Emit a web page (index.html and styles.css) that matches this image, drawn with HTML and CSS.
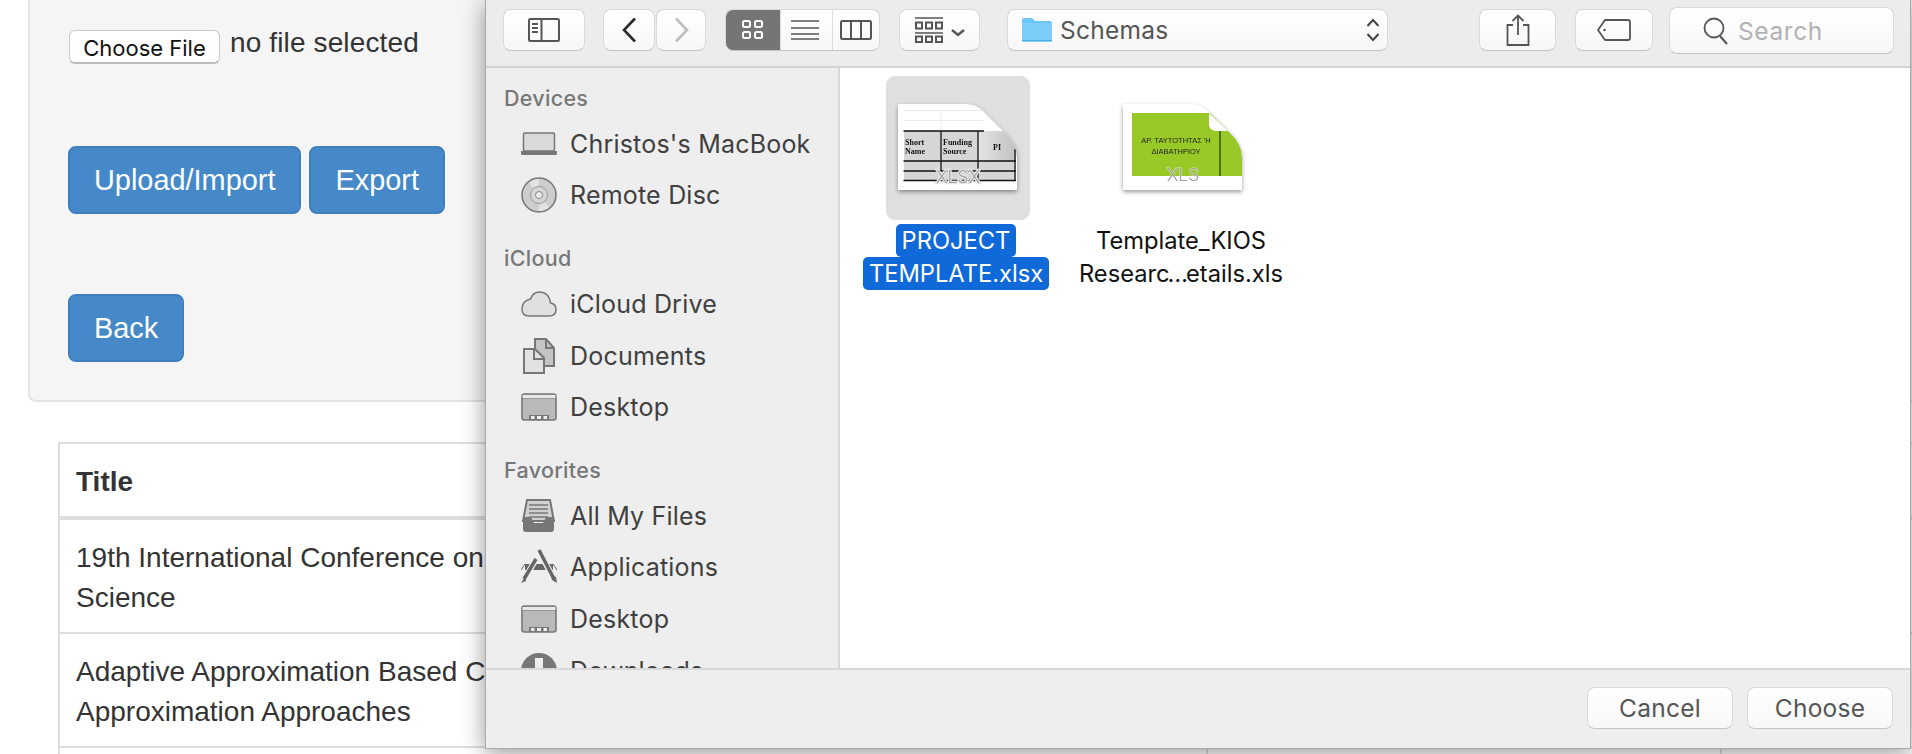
FILE: index.html
```html
<!DOCTYPE html>
<html lang="en">
<head>
<meta charset="utf-8">
<title>Import schemas</title>
<link rel="stylesheet" href="styles.css">
</head>
<body>
<main class="page">
  <section class="well">
    <div class="file-row">
      <button class="file-btn" type="button">Choose File</button>
      <span class="file-name">no file selected</span>
    </div>
    <div class="btn-row first">
      <button class="btn" type="button">Upload/Import</button>
      <button class="btn" type="button">Export</button>
    </div>
    <div class="btn-row second">
      <button class="btn" type="button">Back</button>
    </div>
  </section>
  <table class="table">
    <thead>
      <tr><th class="c1">Title</th><th class="c2"></th><th></th></tr>
    </thead>
    <tbody>
      <tr><td>19th International Conference on<br>Science</td><td></td><td></td></tr>
      <tr><td>Adaptive Approximation Based Control:<br>Approximation Approaches</td><td></td><td></td></tr>
      <tr><td>&nbsp;<br>&nbsp;</td><td></td><td></td></tr>
    </tbody>
  </table>
</main>

<div class="dialog">
  <header class="toolbar">
    <button class="tb tb-side" type="button" aria-label="Sidebar">
      <svg width="32" height="24" viewBox="0 0 32 24"><rect x="1" y="1" width="30" height="22" rx="1.5" fill="none" stroke="#555" stroke-width="2"/><path d="M13.500 1V23" stroke="#555" stroke-width="2"/><path d="M4 6H10M4 10H10M4 14H10" stroke="#555" stroke-width="2"/></svg>
    </button>
    <div class="nav">
      <button class="tb tb-nav" type="button" aria-label="Back">
        <svg width="15" height="26" viewBox="0 0 15 26"><path d="M13 1.500 2 13 13 24.500" fill="none" stroke="#2b2b2b" stroke-width="2.600"/></svg>
      </button>
      <button class="tb tb-nav" type="button" aria-label="Forward">
        <svg width="15" height="26" viewBox="0 0 15 26"><path d="M2 1.500 13 13 2 24.500" fill="none" stroke="#bdbdbd" stroke-width="2.600"/></svg>
      </button>
    </div>
    <div class="seg">
      <button class="seg-btn on" type="button" aria-label="Icons">
        <svg width="22" height="20" viewBox="0 0 22 20"><g fill="none" stroke="#fff" stroke-width="2"><rect x="1" y="1" width="7" height="6" rx="1.500"/><rect x="13" y="1" width="7" height="6" rx="1.500"/><rect x="1" y="12" width="7" height="6" rx="1.500"/><rect x="13" y="12" width="7" height="6" rx="1.500"/></g></svg>
      </button>
      <button class="seg-btn" type="button" aria-label="List">
        <svg width="28" height="20" viewBox="0 0 28 20"><path d="M0 1H28M0 8H28M0 14H28M0 19H28" stroke="#555" stroke-width="1.600"/></svg>
      </button>
      <button class="seg-btn" type="button" aria-label="Columns">
        <svg width="32" height="20" viewBox="0 0 32 20"><rect x="1" y="1" width="30" height="18" rx="1.500" fill="none" stroke="#555" stroke-width="2"/><path d="M11 1V19M21 1V19" stroke="#555" stroke-width="2"/></svg>
      </button>
    </div>
    <button class="tb tb-arrange" type="button" aria-label="Arrange">
      <svg width="50" height="26" viewBox="0 0 50 26"><path d="M0 1H28M0 16H28" stroke="#555" stroke-width="1.600"/><g fill="none" stroke="#555" stroke-width="2"><rect x="1" y="5.500" width="6" height="6"/><rect x="11" y="5.500" width="6" height="6"/><rect x="21" y="5.500" width="6" height="6"/><rect x="1" y="19.500" width="6" height="5.500"/><rect x="11" y="19.500" width="6" height="5.500"/><rect x="21" y="19.500" width="6" height="5.500"/></g><path d="M37 13 43 18 49 13" fill="none" stroke="#555" stroke-width="2.400"/></svg>
    </button>
    <div class="tb tb-path">
      <svg class="folder" width="30" height="24" viewBox="0 0 30 24"><path d="M0 2Q0 0 2 0H10L13 3H28Q30 3 30 5V22Q30 24 28 24H2Q0 24 0 22Z" fill="#6cc6f7"/><path d="M0 5H30V22Q30 24 28 24H2Q0 24 0 22Z" fill="#7ccdf8"/><path d="M0 22.500H30" stroke="#55aede" stroke-width="1"/></svg>
      <span class="path-name">Schemas</span>
      <svg class="updown" width="14" height="24" viewBox="0 0 14 24"><path d="M1.500 8 7 2 12.500 8M1.500 16 7 22 12.500 16" fill="none" stroke="#444" stroke-width="2"/></svg>
    </div>
    <button class="tb tb-share" type="button" aria-label="Share">
      <svg width="24" height="32" viewBox="0 0 24 32"><path d="M7 11H1.500V31H22.500V11H17M12 21V2M6.500 7 12 1.500 17.500 7" fill="none" stroke="#555" stroke-width="1.800"/></svg>
    </button>
    <button class="tb tb-tag" type="button" aria-label="Tags">
      <svg width="34" height="22" viewBox="0 0 34 22"><path d="M8 1H31Q33 1 33 3V19Q33 21 31 21H8L1 11Z" fill="none" stroke="#555" stroke-width="1.800" stroke-linejoin="round"/><circle cx="7.500" cy="11" r="1.300" fill="#555"/></svg>
    </button>
    <div class="tb tb-search">
      <svg width="26" height="28" viewBox="0 0 26 28"><circle cx="11" cy="11" r="9.500" fill="none" stroke="#555" stroke-width="1.800"/><path d="M17 19 24 27" stroke="#555" stroke-width="2"/></svg>
      <span class="search-text">Search</span>
    </div>
  </header>

  <div class="body">
    <nav class="sidebar">
      <h2 class="side-label">Devices</h2>
      <a class="side-item"><svg class="ico" viewBox="0 0 36 24"><rect x="2.500" y="1" width="31" height="18" rx="1.500" fill="#d9d9d9" stroke="#777" stroke-width="1.500"/><path d="M0 19H36V21.500Q36 23 34 23H2Q0 23 0 21.500Z" fill="#777"/></svg>Christos's MacBook</a>
      <a class="side-item"><svg class="ico" viewBox="0 0 36 36"><circle cx="18" cy="18" r="17" fill="#cdcdcd" stroke="#777" stroke-width="1.500"/><path d="M18 18 8 6A16 16 0 0 1 18 2ZM18 18 28 30A16 16 0 0 1 18 34Z" fill="#e2e2e2"/><circle cx="18" cy="18" r="8.500" fill="#d6d6d6" stroke="#999"/><circle cx="18" cy="18" r="3.500" fill="#eee" stroke="#888"/></svg>Remote Disc</a>

      <h2 class="side-label gap">iCloud</h2>
      <a class="side-item"><svg class="ico" viewBox="0 0 36 26"><path d="M8 25H28Q35 25 35 18.500 35 13 29.500 12 28 1 18.500 1 12 1 9.500 8 1 10 1 18 1 25 8 25Z" fill="#e0e0e0" stroke="#777" stroke-width="1.500"/></svg>iCloud Drive</a>
      <a class="side-item"><svg class="ico" viewBox="0 0 36 36"><path d="M14 1H25L33 10V28H14Z" fill="#c4c4c4" stroke="#777" stroke-width="2"/><path d="M3 11H14L23 20V35H3Z" fill="#e2e2e2" stroke="#777" stroke-width="2"/><path d="M13 11V21H23M25 1V10H33" fill="none" stroke="#777" stroke-width="2"/></svg>Documents</a>
      <a class="side-item"><svg class="ico" viewBox="0 0 36 28"><use href="#desk"/></svg>Desktop</a>

      <h2 class="side-label gap">Favorites</h2>
      <a class="side-item"><svg class="ico" viewBox="0 0 36 34"><path d="M6 1H29L33 22H2Z" fill="#d0d0d0" stroke="#777" stroke-width="2"/><path d="M8 6H27M8 10H27M8 14H27M8 18H27" stroke="#777" stroke-width="1.500"/><path d="M2 18H10L13 24H22L25 18H33V30Q33 33 30 33H5Q2 33 2 30Z" fill="#777"/></svg>All My Files</a>
      <a class="side-item"><svg class="ico" viewBox="0 0 36 36"><path d="M4 15H32V21H4Z" fill="#666"/><path d="M0 21 4 15M36 21 32 15" stroke="#666"/><path d="M17 1 35 33" stroke="#eee" stroke-width="6"/><path d="M18 1 33 30" stroke="#666" stroke-width="3.500"/><path d="M30 26 35 28 36 34 31 31Z" fill="#666"/><path d="M15 10 3 31" stroke="#eee" stroke-width="6"/><path d="M15 10 3 30" stroke="#666" stroke-width="3.500"/><path d="M4 28 0 34 5 32Z" fill="#666"/></svg>Applications</a>
      <a class="side-item"><svg class="ico" viewBox="0 0 36 28"><use href="#desk"/></svg>Desktop</a>
      <a class="side-item"><svg class="ico" viewBox="0 0 36 36"><circle cx="18" cy="18" r="18" fill="#777"/><path d="M14 5H22V18H28L18 30 8 18H14Z" fill="#eee"/></svg>Downloads</a>
    </nav>

    <div class="files">
      <figure class="file selected">
        <div class="thumb">
          <svg class="doc" width="120" height="94" viewBox="0 0 120 94">
            <defs>
              <clipPath id="page"><path d="M0 0H68Q78 0 86 8L107 29Q119 40 119 54V86H0Z"/></clipPath>
              <linearGradient id="corner" x1="0" y1="0" x2="1" y2="0"><stop offset="0" stop-color="#e4e4e4"/><stop offset="1" stop-color="#c2c2c2"/></linearGradient>
            </defs>
            <g clip-path="url(#page)">
              <rect width="120" height="88" fill="#fff"/>
              <path d="M6 6.500H86M6 16.500H86M43 6.500V26" stroke="#e9e9f6"/>
              <rect x="6" y="27" width="112" height="50" fill="#d6d6d6"/>
              <rect x="80" y="27" width="38" height="30" fill="url(#corner)"/>
              <path d="M5.500 27H86M5.500 57H118M5.500 67H118M5.500 76.500H118M43 27V67M80 27V76.500M117 45V76.500" stroke="#111" stroke-width="1.300"/>
            </g>
            <path d="M85 11V21Q86 27 94 27H105Z" fill="#fff"/>
            <g class="sheet-text"><text x="7" y="41">Short</text><text x="7" y="49.500">Name</text><text x="45" y="41">Funding</text><text x="45" y="49.500">Source</text><text x="95" y="45.500">PI</text></g>
            <text class="kind" x="60" y="79">XLSX</text>
          </svg>
        </div>
        <figcaption class="caption"><span>PROJECT</span><span>TEMPLATE.xlsx</span></figcaption>
      </figure>
      <figure class="file">
        <div class="thumb">
          <svg class="doc" width="120" height="94" viewBox="0 0 120 94">
            <defs>
              <clipPath id="page2"><path d="M0 0H68Q78 0 86 8L107 29Q119 40 119 54V86H0Z"/></clipPath>
            </defs>
            <g clip-path="url(#page2)">
              <rect width="120" height="88" fill="#fff"/>
              <rect x="9" y="9" width="110" height="63" fill="#98c927"/>
              <path d="M97 25V72" stroke="#111"/>
            </g>
            <path d="M86 9V21Q87 27 94 27H105Z" fill="#fff"/>
            <g class="green-text"><text x="53" y="39">ΑΡ. ΤΑΥΤΟΤΗΤΑΣ 'Η</text><text x="53" y="50">ΔΙΑΒΑΤΗΡΙΟΥ</text></g>
            <text class="kind on-green" x="60" y="77">XLS</text>
          </svg>
        </div>
        <figcaption class="caption plain"><span>Template_KIOS</span><span>Researc<i class="dots">…</i>etails.xls</span></figcaption>
      </figure>
    </div>
  </div>

  <footer class="footer">
    <button class="tb tb-foot" type="button">Cancel</button>
    <button class="tb tb-foot" type="button">Choose</button>
  </footer>
</div>

<svg class="defs" width="0" height="0" aria-hidden="true">
  <symbol id="desk" viewBox="0 0 36 28"><rect x="1" y="1" width="34" height="26" rx="2.500" fill="#b9b9b9" stroke="#777" stroke-width="1.600"/><path d="M1 5H35" stroke="#777" stroke-width="1.200"/><path d="M1.500 2H34.500V5H1.500Z" fill="#e8e8e8"/><path d="M8 22H28V27H8Z" fill="#777"/><path d="M10 23H13.500V26H10ZM16 23H20V26H16ZM22.500 23H26V26H22.500Z" fill="#eee"/></symbol>
</svg>
</body>
</html>
```

FILE: styles.css
```css
* { box-sizing: border-box; }
html, body { margin: 0; height: 754px; overflow: hidden; background: #fff; }
body { font-family: "Liberation Sans", Arial, sans-serif; font-size: 28px; color: #333; position: relative; }
button { font: inherit; cursor: default; }
.defs { position: absolute; }

/* page behind the dialog */
.page { width: 1960px; }
.well { margin-left: 28px; height: 402px; padding: 30px 0 0 38px; background: #f5f5f5; border: 2px solid #e3e3e3; border-top: 0; border-radius: 0 0 0 8px; }
.file-row { display: flex; align-items: flex-start; height: 34px; margin-left: 1px; }
.file-btn { width: 151px; height: 34px; padding: 2px 0 0; background: #fff; border: 1px solid #c8c8c8; border-bottom: 2px solid #bbb; border-radius: 6px; font-family: Inter, sans-serif; font-size: 22px; color: #111; }
.file-name { margin-left: 10px; line-height: 34px; margin-top: -4px; letter-spacing: .13px; }
.btn-row { display: flex; gap: 8px; }
.btn-row.first { margin-top: 82px; }
.btn-row.second { margin-top: 80px; }
.btn { height: 68px; padding: 0 24px; background: #4689c8; border: 2px solid #3f7fbd; border-radius: 8px; color: #fff; font-size: 28.900px; }

.table { margin: 40px 0 0 58px; width: 1900px; border-collapse: collapse; table-layout: fixed; background: #fff; }
.table th, .table td { border: 2px solid #ddd; padding: 18px 16px 14px; line-height: 40px; text-align: left; vertical-align: top; font-size: 28px; }
.table thead th { border-bottom-width: 4px; padding: 18px 16px 14px; line-height: 40px; }
.c1 { width: 1148px; }
.c2 { width: 514px; }

/* open dialog */
.dialog { position: absolute; left: 485px; top: 0; width: 1426px; height: 749px; display: flex; flex-direction: column; background: #eee; border: 1px solid #aaa; border-top: 0; box-shadow: 0 4px 22px rgba(0,0,0,.42); font-family: Inter, "Liberation Sans", sans-serif; }

.toolbar { flex: none; height: 68px; display: flex; align-items: flex-start; padding: 9px 0 0 17px; background: #ececec; border-bottom: 2px solid #d3d3d3; }
.tb { display: flex; align-items: center; justify-content: center; height: 42px; padding: 0; background: linear-gradient(#fff, #f7f7f7); border: 1px solid #d9d9d9; border-bottom-color: #c4c4c4; border-radius: 8px; color: #555; }
.tb-side { width: 82px; }
.nav { display: flex; gap: 1px; margin-left: 18px; }
.tb-nav { width: 52px; }
.nav .tb-nav + .tb-nav { width: 50px; }
.seg { display: flex; width: 155px; height: 42px; margin-left: 19px; background: linear-gradient(#fff, #f7f7f7); border: 1px solid #d9d9d9; border-bottom-color: #c4c4c4; border-radius: 8px; overflow: hidden; }
.seg-btn { flex: 1 1 auto; display: flex; align-items: center; justify-content: center; padding: 0; background: none; border: 0; border-left: 1px solid #ddd; }
.seg-btn.on { flex: none; width: 54px; background: #757575; border: 0; }
.seg-btn:nth-child(2) { width: 52px; flex: none; padding-right: 4px; }
.tb-arrange { width: 81px; margin-left: 19px; }
.tb-path { width: 381px; margin-left: 27px; padding: 0 7px 0 14px; justify-content: flex-start; }
.path-name { margin-left: 8px; font-size: 24.500px; color: #555; flex: 1; letter-spacing: .25px; }
.tb-share { width: 77px; margin-left: 91px; }
.tb-tag { width: 78px; margin-left: 19px; }
.tb-search { width: 225px; height: 47px; margin: -2px 0 0 16px; justify-content: flex-start; padding-left: 33px; }
.search-text { margin-left: 9px; font-size: 24.500px; color: #b2b2b2; letter-spacing: .6px; }

.body { flex: 1; display: flex; min-height: 0; }
.sidebar { flex: none; width: 354px; padding: 10px 0 0 18px; background: #eee; border-right: 2px solid #d8d8d8; overflow: hidden; }
.side-label { margin: 0; height: 40px; line-height: 40px; font-size: 21.500px; font-weight: 500; color: #777; letter-spacing: .3px; }
.side-label.gap { margin-top: 17px; }
.side-item { display: flex; align-items: center; height: 51.600px; padding-left: 17px; font-size: 25px; color: #404040; letter-spacing: .2px; }
.ico { flex: none; width: 36px; height: 36px; margin-right: 13px; }

.files { flex: 1; display: flex; align-items: flex-start; padding: 8px 0 0 5px; background: #fff; }
.file { width: 225px; margin: 0; display: flex; flex-direction: column; align-items: center; }
.thumb { width: 144px; height: 144px; padding-top: 28px; display: flex; justify-content: center; border-radius: 9px; }
.selected .thumb { background: #dfdfdf; }
.doc { margin-left: 1px; filter: drop-shadow(0 2px 2px rgba(0,0,0,.4)); }
.sheet-text text { font-family: "Liberation Serif", serif; font-size: 8px; font-weight: 700; fill: #111; }
.green-text text { font-family: "Liberation Sans", sans-serif; font-size: 7.500px; fill: #222; text-anchor: middle; }
.kind { font-family: Inter, sans-serif; font-size: 17.500px; font-weight: 300; fill: #a0a0a0; text-anchor: middle; paint-order: stroke; stroke: #e6e6e6; stroke-width: 2.500px; }
.kind.on-green { stroke: rgba(255,255,255,.45); stroke-width: 1.500px; }
.caption { margin: 4px 0 0 -3px; display: flex; flex-direction: column; align-items: center; font-size: 23.700px; color: #fff; white-space: nowrap; }
.caption span { height: 33px; line-height: 34px; padding: 0 6px; background: #1069d9; border-radius: 5px; }
.caption.plain { color: #111; }
.caption.plain span { background: none; }
.dots { margin: 0 -2px; font-style: normal; }

.footer { flex: none; height: 80px; display: flex; justify-content: flex-end; gap: 14px; padding: 17px 17px 0 0; background: #eee; border-top: 2px solid #d8d8d8; }
.tb-foot { width: 146px; font-size: 24.500px; letter-spacing: .25px; }
```
